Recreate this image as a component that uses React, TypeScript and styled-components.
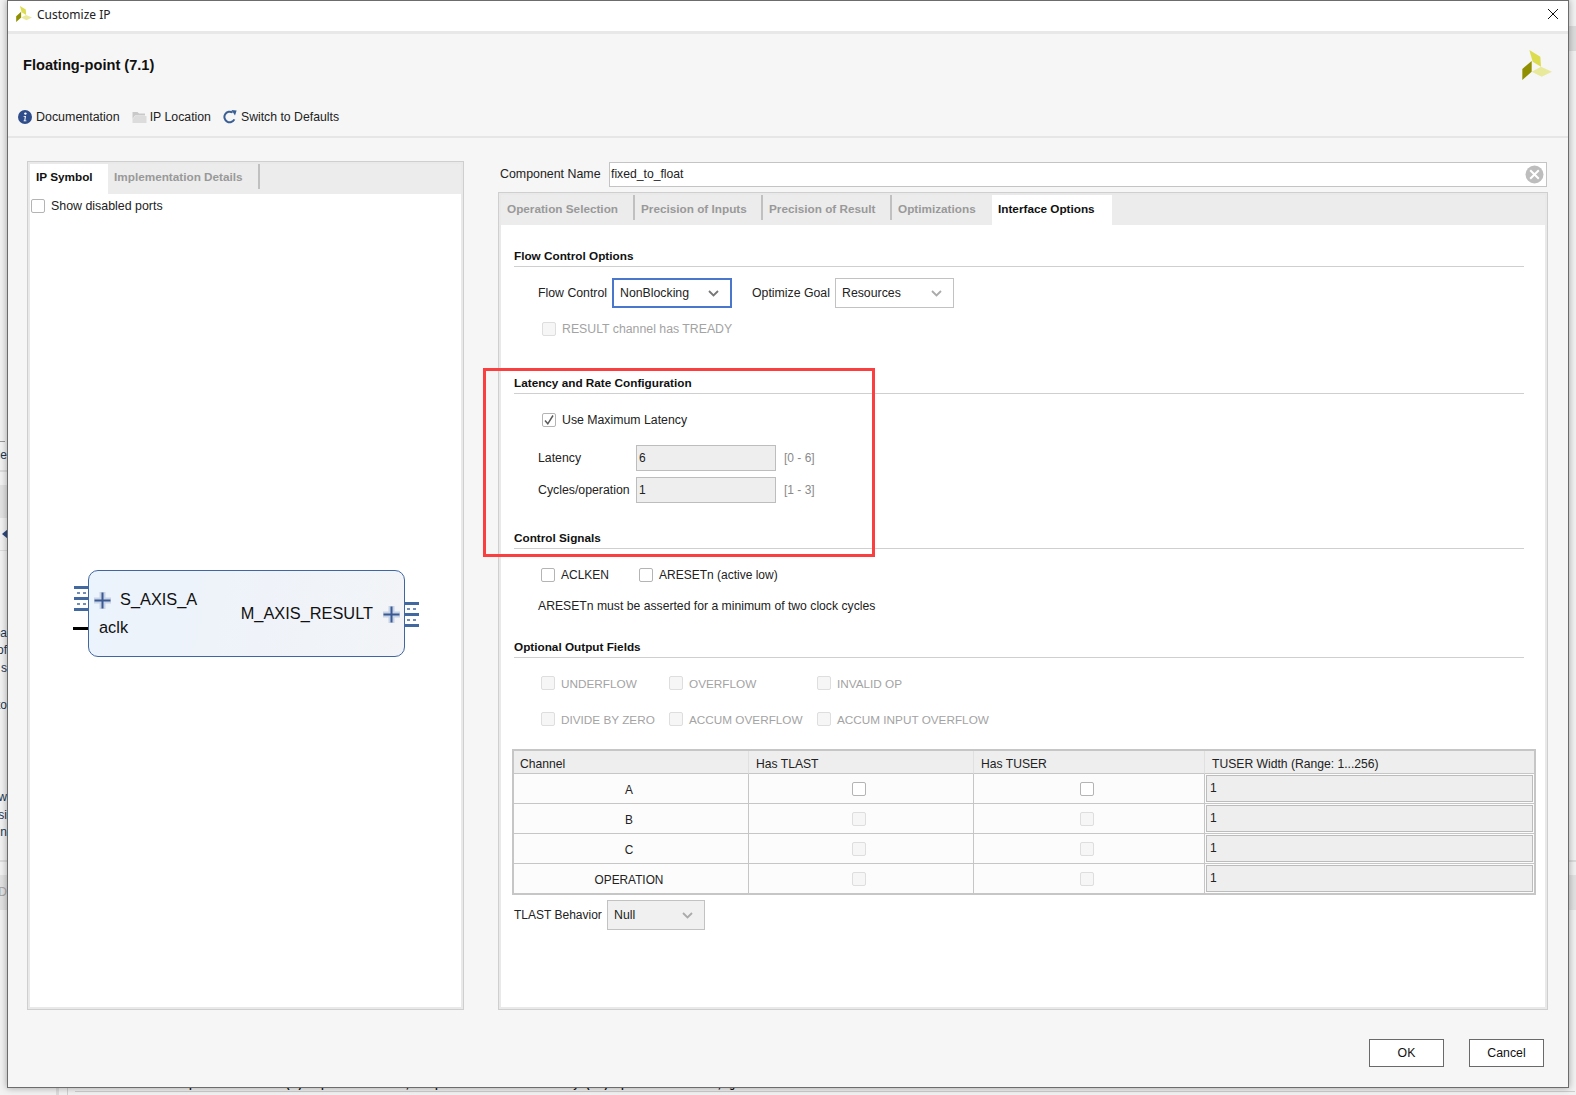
import React from "react";
import styled, { createGlobalStyle } from "styled-components";

const Global = createGlobalStyle`
  * { box-sizing: border-box; }
  html, body { margin: 0; padding: 0; background: #f2f2f2; }
  body { font-family: "Liberation Sans", Arial, sans-serif; font-size: 12px; color: #1a1a1a; }
`;

/* ---------- the desktop behind the dialog ---------- */
const Desktop = styled.div`
  position: relative;
  width: 1576px;
  height: 1095px;
  overflow: hidden;
  background: #f2f2f2;
`;
const BehindBand = styled.div<{ $x: number; $y: number; $w: number; $h: number; $c: string }>`
  position: absolute;
  left: ${(p) => p.$x}px;
  top: ${(p) => p.$y}px;
  width: ${(p) => p.$w}px;
  height: ${(p) => p.$h}px;
  background: ${(p) => p.$c};
`;
const BehindText = styled.div<{ $y: number; $muted?: boolean }>`
  position: absolute;
  left: 0;
  top: ${(p) => p.$y}px;
  width: 7px;
  height: 15px;
  overflow: hidden;
  display: flex;
  justify-content: flex-end;
  white-space: nowrap;
  font-size: 12px;
  line-height: 15px;
  color: ${(p) => (p.$muted ? "#a8a8a8" : "#24364f")};
`;
const BehindArrow = styled.div`
  position: absolute;
  left: 2px;
  top: 529px;
  width: 0;
  height: 0;
  border-top: 5px solid transparent;
  border-bottom: 5px solid transparent;
  border-right: 6px solid #2c4a80;
`;
const BehindLog = styled.div`
  position: absolute;
  left: 75px;
  top: 1079px;
  white-space: nowrap;
  font-family: "Liberation Mono", monospace;
  font-size: 10px;
  font-weight: 700;
  line-height: 14px;
  color: #111;
`;

/* ---------- dialog shell ---------- */
const Dialog = styled.div`
  position: absolute;
  left: 7px;
  top: 0;
  width: 1562px;
  height: 1088px;
  display: flex;
  flex-direction: column;
  background: #f6f6f6;
  border: 1px solid #6c6c6c;
  box-shadow: 0 0 7px rgba(0, 0, 0, 0.35);
`;
const TitleBar = styled.div`
  height: 33px;
  flex: none;
  display: flex;
  align-items: center;
  padding: 0 9px 4px 8px;
  background: #fff;
  border-bottom: 3px solid #e8e8e8;
`;
const TitleText = styled.span`
  margin-left: 5px;
  font-family: "Noto Sans", sans-serif;
  font-size: 12px;
  color: #222;
  flex: 1;
`;
const Header = styled.div`
  flex: none;
  display: flex;
  flex-direction: column;
  height: 104px;
  padding-top: 16px;
  border-bottom: 2px solid #e6e6e6;
`;
const NameRow = styled.div`
  height: 30px;
  display: flex;
  align-items: center;
  justify-content: space-between;
  padding: 0 16px 0 15px;
`;
const IpName = styled.div`
  font-size: 14.6px;
  font-weight: 700;
  color: #111;
`;
const Toolbar = styled.div`
  margin-top: 27px;
  height: 20px;
  display: flex;
  align-items: center;
  padding-left: 10px;
`;
const ToolItem = styled.div<{ $gap: number; $mr: number; $size?: number }>`
  display: flex;
  align-items: center;
  gap: ${(p) => p.$gap}px;
  margin-right: ${(p) => p.$mr}px;
  font-size: ${(p) => p.$size ?? 12.3}px;
  color: #222;
`;

/* ---------- body ---------- */
const Body = styled.div`
  height: 871px;
  flex: none;
  display: flex;
  padding: 23px 20px 0 19px;
  gap: 34px;
`;
const Panel = styled.div<{ $w: number }>`
  width: ${(p) => p.$w}px;
  flex: none;
  display: flex;
  flex-direction: column;
  border: 1px solid #cfcfcf;
  padding: 2px;
  background: #e9e9e9;
`;
const LeftPanel = styled(Panel)`
  height: 849px;
`;
const TabbedPanel = styled(Panel)`
  flex: 1;
  min-height: 0;
`;
const RightColumn = styled.div`
  width: 1050px;
  height: 849px;
  flex: none;
  display: flex;
  flex-direction: column;
`;
const TabStrip = styled.div<{ $lh: number }>`
  height: 30px;
  flex: none;
  display: flex;
  line-height: ${(p) => p.$lh}px;
  background: #ececec;
`;
const Tab = styled.div<{ $w: number; $active?: boolean; $sep?: boolean }>`
  position: relative;
  width: ${(p) => p.$w}px;
  height: 30px;
  padding-left: 6px;
  font-size: 11.75px;
  font-weight: 700;
  white-space: nowrap;
  color: ${(p) => (p.$active ? "#111" : "#999")};
  background: ${(p) => (p.$active ? "#fff" : "transparent")};
  &::after {
    content: "";
    display: ${(p) => (p.$sep ? "block" : "none")};
    position: absolute;
    right: 0;
    top: 0;
    width: 2px;
    height: 25px;
    background: #c0c0c0;
  }
`;
const PanelContent = styled.div`
  flex: 1;
  min-height: 0;
  display: flex;
  flex-direction: column;
  background: #fff;
`;
const ShowPorts = styled.div`
  display: flex;
  align-items: center;
  height: 20px;
  margin-top: 2px;
  padding-left: 1px;
  gap: 6px;
  font-size: 12.4px;
  color: #222;
`;
const SymbolArea = styled.div`
  margin-top: 354px;
  padding-left: 2px;
  display: flex;
  justify-content: center;
`;
const SymbolBlock = styled.div`
  position: relative;
  width: 317px;
  height: 87px;
  border: 1px solid #3f66a3;
  border-radius: 10px;
  background: linear-gradient(100deg, #ebf3fc 0%, #eff3f9 55%, #f2f4f7 100%);
  font-size: 16.35px;
  line-height: 20px;
  color: #111;
`;
const PortLabel = styled.span<{ $x: number; $y: number; $right?: boolean }>`
  position: absolute;
  top: ${(p) => p.$y}px;
  ${(p) => (p.$right ? `right: ${p.$x}px;` : `left: ${p.$x}px;`)}
`;
const PortGlyph = styled.span<{ $x: number; $y: number }>`
  position: absolute;
  left: ${(p) => p.$x}px;
  top: ${(p) => p.$y}px;
  display: block;
  line-height: 0;
`;
const ClockPin = styled.span`
  position: absolute;
  left: -16px;
  top: 56px;
  width: 15px;
  height: 3px;
  background: #000;
`;

const NameLine = styled.div`
  height: 25px;
  margin-top: 1px;
  margin-bottom: 5px;
  flex: none;
  display: flex;
  align-items: center;
  padding-left: 2px;
`;
const NameLabel = styled.label`
  width: 109px;
  margin-top: -2px;
  font-size: 12.4px;
  color: #222;
`;
const NameInput = styled.div`
  position: relative;
  width: 938px;
  height: 25px;
  padding-left: 1px;
  line-height: 22px;
  background: #fff;
  border: 1px solid #c4c4c4;
  font-size: 12.2px;
  color: #222;
`;
const ClearIcon = styled.span`
  position: absolute;
  right: 2px;
  top: 2px;
  line-height: 0;
`;
const OptionsPane = styled(PanelContent)`
  padding: 0 21px 0 13px;
`;
const SectionTitle = styled.div<{ $mt: number }>`
  margin-top: ${(p) => p.$mt}px;
  height: 19px;
  flex: none;
  line-height: 16px;
  font-size: 11.75px;
  font-weight: 700;
  color: #111;
  border-bottom: 1px solid #cfcfcf;
`;
const FieldRow = styled.div<{ $mt: number; $pl?: number; $h?: number }>`
  margin-top: ${(p) => p.$mt}px;
  padding-left: ${(p) => p.$pl ?? 0}px;
  height: ${(p) => p.$h ?? 20}px;
  flex: none;
  display: flex;
  align-items: center;
`;
const FieldLabel = styled.span<{ $w: number; $ml?: number }>`
  width: ${(p) => p.$w}px;
  margin-left: ${(p) => p.$ml ?? 0}px;
  flex: none;
  font-size: 12.3px;
  color: #222;
  white-space: nowrap;
`;
const TlastLabel = styled(FieldLabel)`
  font-size: 12px;
`;
const Select = styled.div<{ $w: number; $focus?: boolean; $muted?: boolean }>`
  width: ${(p) => p.$w}px;
  height: 30px;
  flex: none;
  display: flex;
  align-items: center;
  justify-content: space-between;
  padding: 0 11px 0 6px;
  font-size: 12.3px;
  color: #222;
  background: ${(p) => (p.$muted ? "#f0f0f0" : "#fff")};
  border: ${(p) => (p.$focus ? "2px solid #4a76cb" : "1px solid #c2c2c2")};
`;
const ValueBox = styled.div`
  width: 140px;
  height: 26px;
  flex: none;
  padding-left: 2px;
  line-height: 24px;
  background: #eeeeee;
  border: 1px solid #bdbdbd;
  font-size: 12px;
  color: #222;
`;
const RangeText = styled.span`
  margin-left: 8px;
  font-size: 12px;
  color: #8a8a8a;
`;
const Note = styled(FieldRow)`
  font-size: 12.2px;
  color: #222;
`;
const CheckItem = styled.div<{ $w?: number; $off?: boolean; $size: number }>`
  width: ${(p) => (p.$w ? `${p.$w}px` : "auto")};
  flex: none;
  display: flex;
  align-items: center;
  gap: 6px;
  font-size: ${(p) => p.$size}px;
  white-space: nowrap;
  color: ${(p) => (p.$off ? "#a3a3a3" : "#222")};
`;
const Box = styled.span<{ $off?: boolean }>`
  width: 14px;
  height: 14px;
  flex: none;
  display: inline-flex;
  align-items: center;
  justify-content: center;
  border-radius: 2px;
  border: 1px solid ${(p) => (p.$off ? "#dedede" : "#b4b4b4")};
  background: ${(p) => (p.$off ? "#f6f6f6" : "#fff")};
`;
const Table = styled.div`
  margin: 20px 0 0 -2px;
  width: 1024px;
  flex: none;
  display: grid;
  grid-template-columns: 234px 225px 231px 1fr;
  grid-template-rows: 23px 30px 30px 30px 29px;
  border: 2px solid #c6c6c6;
`;
const HeadCell = styled.div<{ $first?: boolean }>`
  padding: 2px 0 0 ${(p) => (p.$first ? 6 : 7)}px;
  line-height: 22px;
  font-size: 12.15px;
  color: #222;
  background: #eeeeee;
  border-left: ${(p) => (p.$first ? "0" : "1px solid #e0e0e0")};
  border-bottom: 1px solid #c6c6c6;
`;
const Cell = styled.div<{ $first?: boolean; $last?: boolean }>`
  display: flex;
  align-items: center;
  justify-content: center;
  padding: 1px 4px 0 0;
  font-size: 11.85px;
  color: #222;
  background: #fcfcfc;
  border-left: ${(p) => (p.$first ? "0" : "1px solid #c6c6c6")};
  border-bottom: ${(p) => (p.$last ? "0" : "1px solid #c6c6c6")};
`;
const CellLabel = styled.span`
  margin-top: 2px;
`;
const WidthCell = styled(Cell)`
  padding: 1px;
  justify-content: stretch;
`;
const WidthBox = styled.div`
  width: 100%;
  height: 27px;
  padding-left: 3px;
  line-height: 24px;
  font-size: 12px;
  background: #eeeeee;
  border: 1px solid #bcbcbc;
`;
const Footer = styled.div`
  display: flex;
  justify-content: flex-end;
  gap: 25px;
  padding: 29px 24px 0 0;
  margin-top: 1px;
`;
const Button = styled.button`
  width: 75px;
  height: 28px;
  padding: 0;
  background: #fff;
  border: 1px solid #6a6a6a;
  font-family: inherit;
  font-size: 12.3px;
  color: #111;
`;
const Callout = styled.div`
  position: absolute;
  left: 483px;
  top: 368px;
  width: 392px;
  height: 189px;
  border: 3px solid #f93f3f;
  pointer-events: none;
`;

/* ---------- drawings ---------- */
const Logo = ({ size }: { size: number }) => (
  <svg width={size} height={size} viewBox="0 0 90 90">
    <polygon points="22,0 55,20 57,50 32,35" fill="#dcdc4f" />
    <polygon points="29,33 29,65 1,90 1,57" fill="#8f8f00" />
    <polygon points="57,50 90,65 59,80 29,65" fill="#e9e99c" />
  </svg>
);
const CloseIcon = () => (
  <svg width="12" height="12" viewBox="0 0 12 12">
    <path d="M1 1 L11 11 M11 1 L1 11" stroke="#111" strokeWidth="1" fill="none" />
  </svg>
);
const InfoIcon = () => (
  <svg width="14" height="14" viewBox="0 0 14 14">
    <circle cx="7" cy="7" r="7" fill="#2f4d8a" />
    <circle cx="7.4" cy="3.6" r="1.2" fill="#fff" />
    <path d="M5.6 6 H8 L7.3 10.4 H8.4 V11.2 H5.6 V10.4 H6.3 L6.8 6.8 H5.6 Z" fill="#fff" />
  </svg>
);
const FolderIcon = () => (
  <svg width="15" height="14" viewBox="0 0 15 14">
    <path d="M0.5 2 H5.5 L7 3.5 H13 V5.5 H3 L0.5 9 Z" fill="#c9c9c9" />
    <path d="M0.5 13 V9.5 L3 6 H14.5 V13 Z" fill="#dcdcdc" />
  </svg>
);
const RefreshIcon = () => (
  <svg width="14" height="14" viewBox="0 0 14 14">
    <path d="M11.4 9.4 A5.3 5.3 0 1 1 9.6 2.5" stroke="#3a5f95" strokeWidth="2" fill="none" />
    <polygon points="8.4,0 13.6,0.6 12,5.4" fill="#3a5f95" />
  </svg>
);
const ClearGlyph = () => (
  <svg width="19" height="19" viewBox="0 0 19 19">
    <circle cx="9.5" cy="9.5" r="9" fill="#bdbdbd" />
    <path d="M5.2 5.2 L13.8 13.8 M13.8 5.2 L5.2 13.8" stroke="#fff" strokeWidth="2" />
  </svg>
);
const Chevron = ({ color }: { color: string }) => (
  <svg width="11" height="7" viewBox="0 0 11 7">
    <path d="M1 1 L5.5 5.5 L10 1" stroke={color} strokeWidth="1.8" fill="none" />
  </svg>
);
const Check = () => (
  <svg width="12" height="12" viewBox="0 0 12 12">
    <path d="M2 6.5 L4.8 9.8 L10 1.5" stroke="#5a5a5a" strokeWidth="1.5" fill="none" />
  </svg>
);
const PlusGlyph = () => (
  <svg width="17" height="17" viewBox="0 0 17 17">
    <rect x="0" y="5.5" width="17" height="6" fill="#c9d3e6" />
    <rect x="5.5" y="0" width="6" height="17" fill="#c9d3e6" />
    <rect x="0.5" y="7.5" width="16" height="2" fill="#3a5a94" />
    <rect x="7.5" y="0.5" width="2" height="16" fill="#3a5a94" />
  </svg>
);
const BusGlyph = () => (
  <svg width="15" height="25" viewBox="0 0 15 25">
    <rect x="0" y="0" width="15" height="3" fill="#41699f" />
    <rect x="0" y="11" width="15" height="3" fill="#41699f" />
    <rect x="0" y="22" width="15" height="3" fill="#41699f" />
    <path d="M3 7 H6 M9 7 H12 M3 18 H6 M9 18 H12" stroke="#41699f" strokeWidth="1.5" />
  </svg>
);

const CheckOption = ({
  label,
  w,
  off,
  checked,
  size = 12.3,
}: {
  label: string;
  w?: number;
  off?: boolean;
  checked?: boolean;
  size?: number;
}) => (
  <CheckItem $w={w} $off={off} $size={size}>
    <Box $off={off}>{checked ? <Check /> : null}</Box>
    {label}
  </CheckItem>
);

const channels = ["A", "B", "C", "OPERATION"];

export default function App() {
  return (
    <Desktop>
      <Global />
      <BehindBand $x={0} $y={441} $w={5} $h={1} $c="#999" />
      <BehindText $y={448}>de</BehindText>
      <BehindBand $x={0} $y={470} $w={7} $h={2} $c="#dcdcdc" />
      <BehindBand $x={0} $y={485} $w={7} $h={33} $c="#e2e2e2" />
      <BehindBand $x={0} $y={550} $w={7} $h={1} $c="#dcdcdc" />
      <BehindArrow />
      <BehindText $y={626}>pa</BehindText>
      <BehindText $y={643}>of</BehindText>
      <BehindText $y={661}>s</BehindText>
      <BehindText $y={698}>to</BehindText>
      <BehindText $y={790}>w</BehindText>
      <BehindText $y={808}>si</BehindText>
      <BehindText $y={825}>in</BehindText>
      <BehindBand $x={0} $y={860} $w={7} $h={2} $c="#dcdcdc" />
      <BehindBand $x={0} $y={875} $w={7} $h={35} $c="#e2e2e2" />
      <BehindText $y={885} $muted>D</BehindText>
      <BehindBand $x={1569} $y={26} $w={7} $h={25} $c="#dcdcdc" />
      <BehindBand $x={1569} $y={860} $w={7} $h={2} $c="#dcdcdc" />
      <BehindBand $x={1569} $y={875} $w={7} $h={35} $c="#e2e2e2" />
      <BehindBand $x={56} $y={1088} $w={3} $h={7} $c="#dcdcdc" />
      <BehindBand $x={67} $y={1088} $w={1} $h={7} $c="#d0d0d0" />
      <BehindBand $x={75} $y={1091} $w={1500} $h={1} $c="#cfcfcf" />
      <BehindLog>
        Function and Load Optimizer : Time (s): cpu = 00:00:03 ; elapsed = 00:00:04 . Memory (MB): peak = 2377.449 ; gain = 0.000
      </BehindLog>

      <Dialog>
        <TitleBar>
          <Logo size={16} />
          <TitleText>Customize IP</TitleText>
          <CloseIcon />
        </TitleBar>
        <Header>
          <NameRow>
            <IpName>Floating-point (7.1)</IpName>
            <Logo size={30} />
          </NameRow>
          <Toolbar>
            <ToolItem $gap={4} $mr={12} $size={12.45}>
              <InfoIcon />
              Documentation
            </ToolItem>
            <ToolItem $gap={3} $mr={12}>
              <FolderIcon />
              IP Location
            </ToolItem>
            <ToolItem $gap={4} $mr={0} $size={12.25}>
              <RefreshIcon />
              Switch to Defaults
            </ToolItem>
          </Toolbar>
        </Header>
        <Body>
          <LeftPanel $w={437}>
            <TabStrip $lh={25}>
              <Tab $w={78} $active>IP Symbol</Tab>
              <Tab $w={152} $sep>Implementation Details</Tab>
            </TabStrip>
            <PanelContent>
              <ShowPorts>
                <Box />
                Show disabled ports
              </ShowPorts>
              <SymbolArea>
                <SymbolBlock>
                  <PortGlyph $x={-15} $y={15}><BusGlyph /></PortGlyph>
                  <PortGlyph $x={5} $y={21}><PlusGlyph /></PortGlyph>
                  <PortLabel $x={31} $y={18}>S_AXIS_A</PortLabel>
                  <ClockPin />
                  <PortLabel $x={10} $y={46}>aclk</PortLabel>
                  <PortLabel $x={31} $y={32} $right>M_AXIS_RESULT</PortLabel>
                  <PortGlyph $x={294} $y={35}><PlusGlyph /></PortGlyph>
                  <PortGlyph $x={315} $y={31}><BusGlyph /></PortGlyph>
                </SymbolBlock>
              </SymbolArea>
            </PanelContent>
          </LeftPanel>
          <RightColumn>
            <NameLine>
              <NameLabel>Component Name</NameLabel>
              <NameInput>
                fixed_to_float
                <ClearIcon><ClearGlyph /></ClearIcon>
              </NameInput>
            </NameLine>
            <TabbedPanel $w={1050}>
              <TabStrip $lh={27}>
                <Tab $w={134} $sep>Operation Selection</Tab>
                <Tab $w={128} $sep>Precision of Inputs</Tab>
                <Tab $w={129} $sep>Precision of Result</Tab>
                <Tab $w={100}>Optimizations</Tab>
                <Tab $w={120} $active>Interface Options</Tab>
              </TabStrip>
              <OptionsPane>
                <SectionTitle $mt={23}>Flow Control Options</SectionTitle>
                <FieldRow $mt={11} $pl={24} $h={30}>
                  <FieldLabel $w={74}>Flow Control</FieldLabel>
                  <Select $w={120} $focus>
                    NonBlocking
                    <Chevron color="#777" />
                  </Select>
                  <FieldLabel $w={83} $ml={20}>Optimize Goal</FieldLabel>
                  <Select $w={119}>
                    Resources
                    <Chevron color="#aaa" />
                  </Select>
                </FieldRow>
                <FieldRow $mt={11} $pl={28}>
                  <CheckOption label="RESULT channel has TREADY" off />
                </FieldRow>

                <SectionTitle $mt={36}>Latency and Rate Configuration</SectionTitle>
                <FieldRow $mt={16} $pl={28}>
                  <CheckOption label="Use Maximum Latency" checked />
                </FieldRow>
                <FieldRow $mt={15} $pl={24} $h={26}>
                  <FieldLabel $w={98}>Latency</FieldLabel>
                  <ValueBox>6</ValueBox>
                  <RangeText>[0 - 6]</RangeText>
                </FieldRow>
                <FieldRow $mt={6} $pl={24} $h={26}>
                  <FieldLabel $w={98}>Cycles/operation</FieldLabel>
                  <ValueBox>1</ValueBox>
                  <RangeText>[1 - 3]</RangeText>
                </FieldRow>

                <SectionTitle $mt={27}>Control Signals</SectionTitle>
                <FieldRow $mt={16} $pl={27}>
                  <CheckOption label="ACLKEN" w={98} size={12} />
                  <CheckOption label="ARESETn (active low)" size={12} />
                </FieldRow>
                <Note $mt={11} $pl={24}>ARESETn must be asserted for a minimum of two clock cycles</Note>

                <SectionTitle $mt={23}>Optional Output Fields</SectionTitle>
                <FieldRow $mt={15} $pl={27}>
                  <CheckOption label="UNDERFLOW" w={128} off size={11.75} />
                  <CheckOption label="OVERFLOW" w={148} off size={11.75} />
                  <CheckOption label="INVALID OP" off size={11.75} />
                </FieldRow>
                <FieldRow $mt={16} $pl={27}>
                  <CheckOption label="DIVIDE BY ZERO" w={128} off size={11.75} />
                  <CheckOption label="ACCUM OVERFLOW" w={148} off size={11.75} />
                  <CheckOption label="ACCUM INPUT OVERFLOW" off size={11.75} />
                </FieldRow>

                <Table>
                  <HeadCell $first>Channel</HeadCell>
                  <HeadCell>Has TLAST</HeadCell>
                  <HeadCell>Has TUSER</HeadCell>
                  <HeadCell>TUSER Width (Range: 1...256)</HeadCell>
                  {channels.map((name, i) => {
                    const last = i === channels.length - 1;
                    return (
                      <React.Fragment key={name}>
                        <Cell $first $last={last}><CellLabel>{name}</CellLabel></Cell>
                        <Cell $last={last}><Box $off={i > 0} /></Cell>
                        <Cell $last={last}><Box $off={i > 0} /></Cell>
                        <WidthCell $last={last}><WidthBox>1</WidthBox></WidthCell>
                      </React.Fragment>
                    );
                  })}
                </Table>
                <FieldRow $mt={5} $h={30}>
                  <TlastLabel $w={93}>TLAST Behavior</TlastLabel>
                  <Select $w={98} $muted>
                    Null
                    <Chevron color="#aaa" />
                  </Select>
                </FieldRow>
              </OptionsPane>
            </TabbedPanel>
          </RightColumn>
        </Body>
        <Footer>
          <Button>OK</Button>
          <Button>Cancel</Button>
        </Footer>
      </Dialog>
      <Callout />
    </Desktop>
  );
}
